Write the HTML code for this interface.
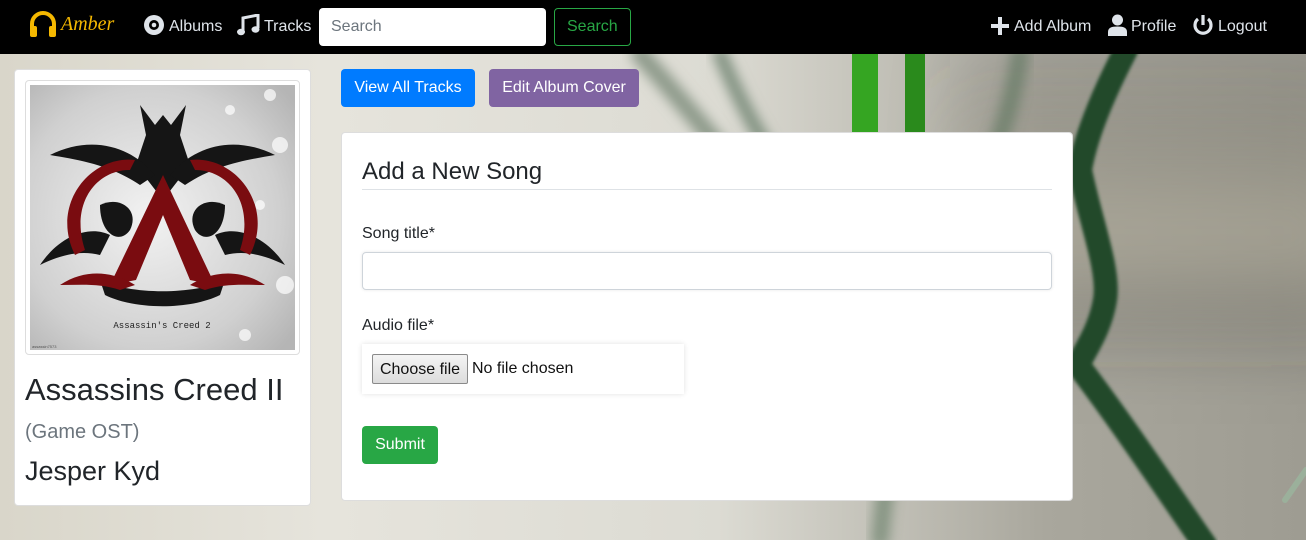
<!DOCTYPE html>
<html><head><meta charset="utf-8"><style>
*{box-sizing:border-box;margin:0;padding:0}
body{width:1306px;height:540px;overflow:hidden;font-family:"Liberation Sans",sans-serif;position:relative;background:#d8d6cc}
.bg{position:absolute;left:0;top:0;width:1306px;height:540px}
.nav{position:absolute;left:0;top:0;width:1306px;height:54px;background:#000}
.nt{position:absolute;color:#dfe4ea;font-size:16px;top:18px}
.abs{position:absolute;white-space:nowrap}
.btn{position:absolute;color:#fff;font-size:16px;border-radius:4px;text-align:center;white-space:nowrap}
</style></head><body>
<svg class="bg" viewBox="0 0 1306 540" preserveAspectRatio="none">
<defs>
<linearGradient id="g1" x1="0" x2="1" y1="0" y2="0">
<stop offset="0" stop-color="#d9d6ca"/><stop offset="0.25" stop-color="#e6e4dc"/><stop offset="0.55" stop-color="#dcdbd3"/><stop offset="0.8" stop-color="#a9a79d"/><stop offset="1" stop-color="#9e9c92"/></linearGradient>
<linearGradient id="g2" x1="0" x2="0" y1="0" y2="1">
<stop offset="0" stop-color="#000" stop-opacity="0"/><stop offset="0.45" stop-color="#b8b29c" stop-opacity="0.4"/><stop offset="0.55" stop-color="#5a584e" stop-opacity="0.3"/><stop offset="0.7" stop-color="#000" stop-opacity="0"/></linearGradient>
<filter id="b"><feGaussianBlur stdDeviation="6"/></filter>
<filter id="bb" x="-50%" width="200%"><feGaussianBlur stdDeviation="30"/></filter>
<filter id="b2"><feGaussianBlur stdDeviation="1.5"/></filter>
</defs>
<rect width="1306" height="540" fill="url(#g1)"/>
<rect x="950" width="400" height="540" fill="url(#g2)" filter="url(#bb)"/>
<g fill="none" stroke-linecap="round">
<path d="M640 54 C700 120 760 200 820 260" stroke="#8d9a8a" stroke-width="18" filter="url(#b)"/>
<path d="M720 54 C760 150 800 200 860 260" stroke="#7e8f7e" stroke-width="14" filter="url(#b)"/>
<path d="M1020 54 C1000 200 900 300 880 540" stroke="#4c6a50" stroke-width="18" filter="url(#b)" opacity=".5"/>
<path d="M1126 50 C1100 100 1085 140 1080 170 C1090 220 1110 270 1105 300 C1100 330 1085 350 1078 365 C1120 420 1160 480 1205 545" stroke="#214a2b" stroke-width="24" filter="url(#b2)"/>
<path d="M1285 500 L1306 470" stroke="#9bb09b" stroke-width="6"/>
</g>
<rect x="852" y="54" width="26" height="80" fill="#35a522"/>
<rect x="905" y="54" width="20" height="80" fill="#2a8a1c"/>
</svg>
<div class="nav">
<svg class="abs" style="left:29px;top:11px" width="28" height="26" viewBox="0 0 28 26"><path d="M3 19 V13 A11 11 0 0 1 25 13 V19" fill="none" stroke="#f5b800" stroke-width="4"/><rect x="1" y="15" width="7" height="11" rx="2" fill="#f5b800"/><rect x="20" y="15" width="7" height="11" rx="2" fill="#f5b800"/></svg>
<div class="abs" style="left:61px;top:13px;color:#f5b800;font-family:'Liberation Serif',serif;font-style:italic;font-size:20px">Amber</div>
<svg class="abs" style="left:144px;top:15px" width="20" height="20" viewBox="0 0 20 20"><circle cx="10" cy="10" r="10" fill="#dfe4ea"/><circle cx="10" cy="10" r="5" fill="#000"/><circle cx="10" cy="10" r="2.3" fill="#dfe4ea"/></svg>
<div class="nt" style="left:169px">Albums</div>
<svg class="abs" style="left:237px;top:14px" width="23" height="22" viewBox="0 0 23 22"><path d="M6 17 V4 L21 1 V14" fill="none" stroke="#dfe4ea" stroke-width="3"/><ellipse cx="4" cy="18" rx="4" ry="3.2" fill="#dfe4ea"/><ellipse cx="18.5" cy="15.5" rx="4" ry="3.2" fill="#dfe4ea"/></svg>
<div class="nt" style="left:264px">Tracks</div>
<div class="abs" style="left:319px;top:8px;width:227px;height:38px;background:#fff;border-radius:4px;color:#6c757d;font-size:16px;padding:10px 12px">Search</div>
<div class="abs" style="left:554px;top:8px;width:77px;height:38px;border:1px solid #28a745;border-radius:4px;color:#28a745;font-size:16px;padding:9px 12px">Search</div>
<svg class="abs" style="left:990px;top:16px" width="20" height="20" viewBox="0 0 20 20"><path d="M10 1V19M1 10H19" stroke="#dfe4ea" stroke-width="4"/></svg>
<div class="nt" style="left:1014px">Add Album</div>
<svg class="abs" style="left:1107px;top:14px" width="21" height="22" viewBox="0 0 21 22"><circle cx="10.5" cy="6" r="5.5" fill="#dfe4ea"/><path d="M1 22 V18 C1 14 4 12.5 10.5 12.5 C17 12.5 20 14 20 18 V22Z" fill="#dfe4ea"/></svg>
<div class="nt" style="left:1131px">Profile</div>
<svg class="abs" style="left:1192px;top:14px" width="22" height="22" viewBox="0 0 22 22"><path d="M6 5 A8 8 0 1 0 16 5" fill="none" stroke="#dfe4ea" stroke-width="3.2"/><path d="M11 1V11" stroke="#dfe4ea" stroke-width="3.2"/></svg>
<div class="nt" style="left:1218px">Logout</div>
</div>

<div class="abs" style="left:14px;top:69px;width:297px;height:437px;background:#fff;border:1px solid #ddd;border-radius:4px"></div>
<div class="abs" style="left:25px;top:80px;width:275px;height:275px;border:1px solid #ddd;border-radius:4px;background:#fff"></div>
<svg class="abs" style="left:30px;top:85px" width="265" height="265" viewBox="0 0 265 265">
<defs><radialGradient id="ag" cx=".45" cy=".5" r=".7"><stop offset="0" stop-color="#f2f2f2"/><stop offset=".7" stop-color="#d0d0d0"/><stop offset="1" stop-color="#b5b5b5"/></radialGradient></defs>
<rect width="265" height="265" fill="url(#ag)"/>
<g fill="#fff" opacity=".7"><circle cx="240" cy="10" r="6"/><circle cx="250" cy="60" r="8"/><circle cx="230" cy="120" r="5"/><circle cx="255" cy="200" r="9"/><circle cx="215" cy="250" r="6"/><circle cx="200" cy="25" r="5"/></g>
<g fill="#151515">
<path d="M110 20 L125 40 L133 30 L141 40 L156 20 L150 50 L160 80 L133 115 L106 80 L116 50Z"/>
<path d="M20 70 C60 50 100 60 125 90 L110 100 C80 80 50 75 20 70Z"/>
<path d="M245 70 C205 50 165 60 140 90 L155 100 C185 80 215 75 245 70Z"/>
<path d="M10 180 C30 150 60 140 80 150 L70 170 C50 165 30 170 10 180Z"/>
<path d="M255 180 C235 150 205 140 185 150 L195 170 C215 165 235 170 255 180Z"/>
<path d="M70 195 C100 210 165 210 195 195 L190 210 C160 225 105 225 75 210Z"/>
<path d="M70 120 C90 110 110 125 100 145 C90 160 70 150 70 120Z"/>
<path d="M195 120 C175 110 155 125 165 145 C175 160 195 150 195 120Z"/>
</g>
<g fill="#7a0c10">
<path d="M133 90 L185 200 L160 195 L133 130 L106 195 L80 200Z"/>
<path d="M45 170 C20 120 60 70 105 75 L100 85 C65 85 40 120 55 165Z"/>
<path d="M220 170 C245 120 205 70 160 75 L165 85 C200 85 225 120 210 165Z"/>
<path d="M30 200 C60 180 90 190 105 200 L90 205 C70 198 50 200 30 200Z"/>
<path d="M235 200 C205 180 175 190 160 200 L175 205 C195 198 215 200 235 200Z"/>
</g>
<text x="132" y="243" text-anchor="middle" font-family="Liberation Mono,monospace" font-size="9" fill="#222">Assassin's Creed 2</text>
<text x="2" y="263" font-size="4" fill="#555" font-family="Liberation Sans,sans-serif">assassin7573</text>
</svg>
<div class="abs" style="left:25px;top:372px;font-size:31px;color:#212529">Assassins Creed II</div>
<div class="abs" style="left:25px;top:421px;font-size:20px;color:#6c757d">(Game OST)</div>
<div class="abs" style="left:25px;top:456px;font-size:27px;color:#212529">Jesper Kyd</div>

<div class="btn" style="left:341px;top:69px;width:134px;height:38px;background:#007bff;padding-top:10px">View All Tracks</div>
<div class="btn" style="left:489px;top:69px;width:150px;height:38px;background:#8064a2;padding-top:10px">Edit Album Cover</div>

<div class="abs" style="left:341px;top:132px;width:732px;height:369px;background:#fff;border:1px solid #ddd;border-radius:4px"></div>
<div class="abs" style="left:362px;top:158px;font-size:24px;color:#212529">Add a New Song</div>
<div class="abs" style="left:362px;top:189px;width:690px;height:1px;background:#dee2e6"></div>
<div class="abs" style="left:362px;top:225px;font-size:16px;color:#212529">Song title*</div>
<div class="abs" style="left:362px;top:252px;width:690px;height:38px;border:1px solid #ced4da;border-radius:4px;box-shadow:0 0 3px rgba(0,0,0,.1)"></div>
<div class="abs" style="left:362px;top:317px;font-size:16px;color:#212529">Audio file*</div>
<div class="abs" style="left:362px;top:344px;width:322px;height:50px;background:#fff;box-shadow:0 0 5px rgba(0,0,0,.12)"></div>
<div class="abs" style="left:372px;top:354px;width:96px;height:30px;border:1px solid #8a8a8a;border-radius:2px;background:linear-gradient(#f4f4f4,#dcdcdc);font-size:16px;color:#111;padding-top:6px;text-align:center">Choose file</div>
<div class="abs" style="left:472px;top:360px;font-size:16px;color:#111">No file chosen</div>
<div class="btn" style="left:362px;top:426px;width:76px;height:38px;background:#28a745;padding-top:10px">Submit</div>
</body></html>
